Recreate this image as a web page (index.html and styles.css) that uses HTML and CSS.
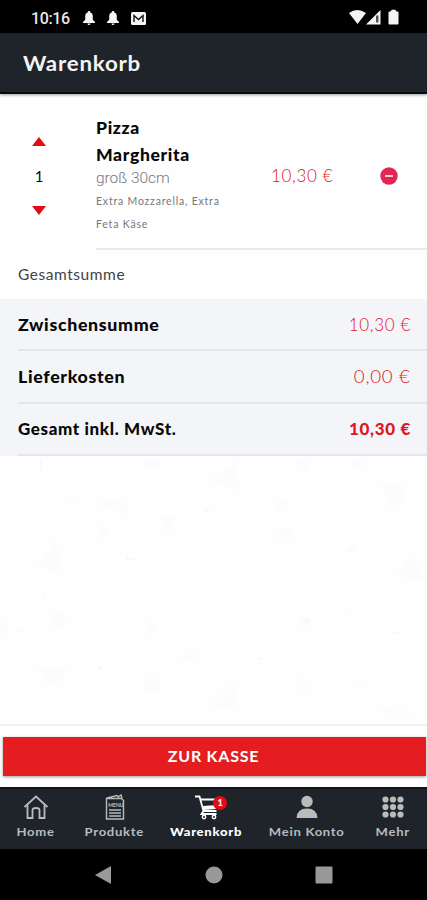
FILE: index.html
```html
<!DOCTYPE html>
<html lang="de">
<head>
<meta charset="utf-8">
<meta name="viewport" content="width=device-width, initial-scale=1">
<title>Warenkorb</title>
<link rel="stylesheet" href="styles.css">
</head>
<body>
<div class="status">
  <span class="clock">10:16</span>
  <svg class="bell" viewBox="0 0 12 14"><path d="M6 0c.9 0 1.2.6 1.2 1.3C9 2 9.800 3.400 9.800 5.500v3.200L12 11v1H0v-1l2.200-2.300V5.500C2.200 3.400 3 2 4.800 1.300 4.800.6 5.100 0 6 0zM4.500 12.500h3a1.500 1.500 0 0 1-3 0z"/></svg>
  <svg class="bell" viewBox="0 0 12 14"><path d="M6 0c.9 0 1.2.6 1.2 1.3C9 2 9.800 3.400 9.800 5.500v3.200L12 11v1H0v-1l2.200-2.300V5.500C2.200 3.400 3 2 4.800 1.300 4.800.6 5.100 0 6 0zM4.500 12.500h3a1.500 1.500 0 0 1-3 0z"/></svg>
  <svg class="mail" viewBox="0 0 15 13"><rect width="15" height="13" rx="1.500"/><path class="mail-line" d="M3 10V3.500l4.500 4 4.500-4V10"/></svg>
  <svg class="signals" viewBox="0 0 50 16"><path d="M1 4Q9-2 18 4L9.500 15z"/><path d="M18 15.500 32.500 1v14.500z"/><path class="signal-gap" d="M28 6.500h2.500v7H28z"/><path d="M40.500 3.500q0-1 1-1h1Q43 .5 45.500.5t3 2h1q1 0 1 1v11q0 1-1 1h-8q-1 0-1-1z"/></svg>
</div>
<header class="header"><h1 class="title">Warenkorb</h1></header>
<main class="main">
  <section class="item">
    <div class="stepper">
      <svg class="arrow" viewBox="0 0 14 9"><path d="M7 0l7 9H0z"/></svg>
      <span class="count">1</span>
      <svg class="arrow" viewBox="0 0 14 9"><path d="M7 9l7-9H0z"/></svg>
    </div>
    <div class="item-body">
      <div class="desc">
        <h2 class="name">Pizza<br>Margherita</h2>
        <p class="size">groß 30cm</p>
        <p class="extras">Extra Mozzarella, Extra<br>Feta Käse</p>
      </div>
      <span class="price item-price">10,30 €</span>
      <svg class="remove" viewBox="0 0 18 18"><circle cx="9" cy="9" r="8.700"/><path d="M5 9h8"/></svg>
    </div>
  </section>
  <div class="heading">Gesamtsumme</div>
  <section class="totals">
    <div class="row"><span class="label">Zwischensumme</span><span class="price">10,30 €</span></div>
    <div class="row"><span class="label">Lieferkosten</span><span class="price zero">0,00 €</span></div>
    <div class="row"><span class="label sum">Gesamt inkl. MwSt.</span><span class="price strong">10,30 €</span></div>
  </section>
  <svg class="pattern" viewBox="0 0 427 269">
    <path d="M36 108l20-22 6 32zM210 26l26-20 4 28zM98 48l28-8 2 18zM382 30l20-2 2 20-14 2zM395 118l18-18 14 28zM38 210l28 2-6 16-14-2zM210 252l24-24 6 26zM145 223h14v12h-14zM162 61h12v13h-12zM275 45h12v10h-12zM297 5h9v10h-9zM145 4h14v8h-14zM353 5h12v8h-12zM297 223l5-2 4 12-8 2zM354 231l6-6 7 7zM49 163l10-10 8 9-7 12zM276 79l9-8 8 7-9 10zM97 69l11 6-5 8zM144 162l14 12-8 4zM182 205l5-13 12 8zM381 252l34 5-15 8zM0 167h8v10H0z"/>
    <path class="mark" d="M127 100v3h6v-2M301 167l5-4 4 1-7 5M345 155h2M97 210l5 3M16 174h5M394 177h6M41 4v12M204 55h6M70 43h5M348 96l7-6M42 139h4M257 203h5"/>
  </svg>
</main>
<footer class="checkout"><button class="button">ZUR KASSE</button></footer>
<nav class="tabs">
  <a class="tab home"><svg class="icon" viewBox="0 0 26 26"><path class="line" d="M1.500 13 13 2.500 24.500 13M4.500 11v13h5V16q0-2 3.500-2t3.500 2v8h5V11"/></svg><span>Home</span></a>
  <a class="tab products"><svg class="icon" viewBox="0 0 26 26"><path class="line thin" d="M4.500 4.500h15l2 2V25h-17zM5 4 15 1.500l2 2M16 3l3-2 1 3M7 16h12M7 19h12M7 22h12"/><text class="menu-text" x="6.300" y="12.500">MENU</text></svg><span>Produkte</span></a>
  <a class="tab cart"><svg class="icon" viewBox="0 0 26 26"><path class="line" d="M1 2.500h4.500l4 14.500h13M7 5.500h17l-2 7.500-13 1.500M9.500 17l-2 3h15"/><path class="fill" d="M9 12l14-1-1 4-12 1z"/><circle class="line wheel" cx="10" cy="23" r="1.700"/><circle class="line wheel" cx="20" cy="23" r="1.700"/></svg><b class="badge">1</b><span>Warenkorb</span></a>
  <a class="tab account"><svg class="icon" viewBox="0 0 26 26"><circle class="fill" cx="13" cy="7.500" r="5.700"/><path class="fill" d="M2.500 24Q3 14.500 13 14.500T23.500 24z"/></svg><span>Mein Konto</span></a>
  <a class="tab more"><svg class="icon" viewBox="0 0 26 26"><g class="fill"><circle cx="5.500" cy="5.500" r="3.100"/><circle cx="13" cy="5.500" r="3.100"/><circle cx="20.500" cy="5.500" r="3.100"/><circle cx="5.500" cy="13" r="3.100"/><circle cx="13" cy="13" r="3.100"/><circle cx="20.500" cy="13" r="3.100"/><circle cx="5.500" cy="20.500" r="3.100"/><circle cx="13" cy="20.500" r="3.100"/><circle cx="20.500" cy="20.500" r="3.100"/></g></svg><span>Mehr</span></a>
</nav>
<div class="system">
  <svg viewBox="0 0 18 20"><path d="M0 10 16 1v18z"/></svg>
  <svg viewBox="0 0 18 20"><circle cx="9" cy="10" r="8.500"/></svg>
  <svg viewBox="0 0 18 20"><rect x=".5" y="1.500" width="17" height="17" rx="1"/></svg>
</div>
</body>
</html>
```
FILE: styles.css
```css
* { box-sizing: border-box; }
body { margin: 0; height: 900px; display: flex; flex-direction: column; overflow: hidden; background: #fefefe; color: #080808; font-family: Lato, "Open Sans", sans-serif; }
h1, h2, p { margin: 0; }
svg { display: block; flex: none; }
.status { height: 33px; flex: none; background: #000; display: flex; align-items: center; padding: 3px 29px 0 31px; fill: #f5f5f5; }
.clock { width: 52px; color: #e8e8e8; font: 500 16px Roboto, sans-serif; letter-spacing: -.4px; }
.bell { width: 12px; height: 14px; margin-right: 12px; }
.mail { width: 15px; height: 13px; margin-right: auto; }
.mail-line { fill: none; stroke: #111; stroke-width: 1.4; }
.signals { width: 50px; height: 16px; margin-top: -2px; overflow: visible; }
.signal-gap { fill: #555; }
.header { height: 61px; flex: none; display: flex; align-items: center; padding: 0 23px; background: #1f242b; border-bottom: 2px solid #080a0c; box-shadow: 0 1px 3px #0006; z-index: 1; }
.title { color: #f4f4f4; font-size: 21.500px; line-height: 30px; font-weight: 700; letter-spacing: .72px; transform: scaleX(1.04); transform-origin: left; }
.main { flex: 1; min-height: 0; display: flex; flex-direction: column; }
.item { height: 156px; display: flex; flex: none; }
.stepper { width: 96px; padding: 43px 18px 0 0; display: flex; flex-direction: column; align-items: center; fill: #e30b14; }
.arrow { width: 14px; height: 9px; }
.count { height: 60px; line-height: 60px; font-size: 15px; }
.item-body { flex: 1; border-bottom: 2px solid #e9e9e9; display: flex; }
.desc { width: 175px; padding-top: 21px; }
.name { font-size: 16px; line-height: 26.500px; font-weight: 900; letter-spacing: .6px; transform: scaleX(1.095); transform-origin: left; }
.size { color: #777; font: 300 15.500px/21px Roboto, sans-serif; letter-spacing: -.05px; }
.extras { color: #777; font-size: 10.500px; line-height: 23px; letter-spacing: .8px; margin-top: 1px; }
.price { color: #df1720; font-size: 17px; letter-spacing: .65px; font-weight: 300; white-space: pre; }
.item-price { width: 110px; padding-top: 71px; line-height: 22px; }
.zero { transform: scaleX(1.1); transform-origin: right; }
.remove { width: 18px; height: 18px; margin-top: 73px; margin-left: -1px; fill: #e22850; stroke: #fff; stroke-width: 1.5; }
.remove circle { stroke: none; }
.heading { height: 49px; flex: none; padding-left: 18px; line-height: 49px; font-size: 15.500px; letter-spacing: .55px; color: #444; }
.totals { flex: none; height: 157px; background: #f3f5f9; padding-left: 18px; }
.row { height: 52.300px; border-bottom: 2px solid #e4e6e9; display: flex; justify-content: space-between; align-items: center; padding-right: 16px; }
.label { font-size: 16px; font-weight: 900; letter-spacing: .6px; transform: scaleX(1.11); transform-origin: left; }
.sum { transform: scaleX(1.06); }
.strong { font-weight: 900; }
.pattern { width: 427px; height: 269px; fill: #fcfcfc; }
.mark { fill: none; stroke: #f7f7f7; stroke-width: 1.5; }
.checkout { height: 63px; flex: none; border-top: 2px solid #f0f0f0; padding: 11px 1px 0 3px; background: #fff; }
.button { display: block; width: 100%; height: 39px; border: 0; padding: 0 2px 2px 0; background: #e51d21; box-shadow: 0 1px 3px #0006; color: #fff; font: 700 16px Lato, sans-serif; letter-spacing: .75px; }
.tabs { height: 62px; flex: none; display: flex; background: #1f242b; border-top: 2px solid #101419; color: #b9bbbd; font-size: 12px; letter-spacing: .65px; font-weight: 700; }
.tab { position: relative; display: flex; flex-direction: column; align-items: center; padding-top: 5px; white-space: nowrap; line-height: 18px; }
.tab span { margin-top: 3px; transform: scaleX(1.09); }
.icon { width: 26px; height: 26px; }
.home { width: 71px; }
.products { width: 87px; }
.cart { width: 97px; color: #fff; font-weight: 900; }
.account { width: 103px; }
.more { width: 69px; }
.line { fill: none; stroke: currentColor; stroke-width: 1.8; }
.thin { stroke-width: 1.4; }
.wheel { stroke-width: 1.4; }
.fill { fill: currentColor; }
.menu-text { fill: currentColor; font: 900 5px Lato, sans-serif; letter-spacing: 0; }
.badge { position: absolute; left: 55px; top: 7px; width: 14px; height: 14px; border-radius: 50%; background: #e30b18; font-size: 9px; line-height: 14px; text-align: center; letter-spacing: 0; }
.system { height: 51px; flex: none; background: #000; fill: #999; display: flex; justify-content: space-between; align-items: center; padding: 0 94px 0 95px; }
.system svg { width: 18px; height: 20px; }
```
